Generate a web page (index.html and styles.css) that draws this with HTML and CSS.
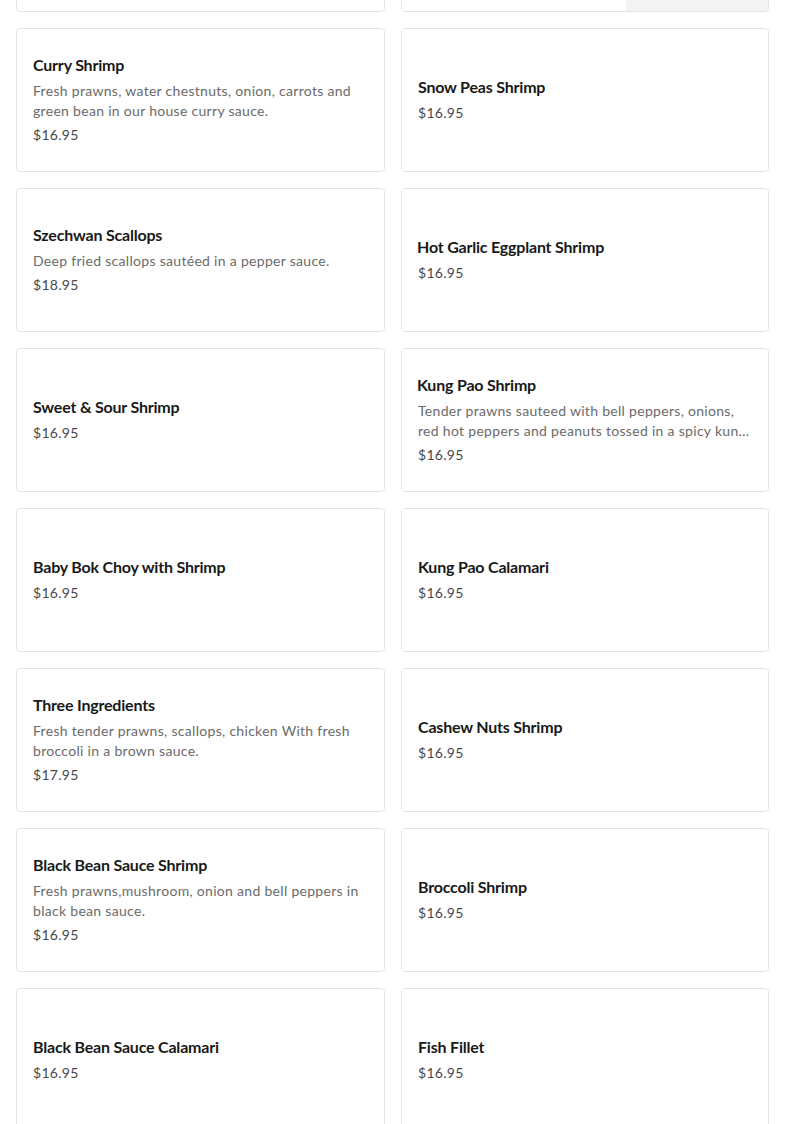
FILE: index.html
```html
<!DOCTYPE html>
<html>
<head>
<meta charset="utf-8">
<link rel="stylesheet" href="styles.css">
</head>
<body>
<div class="menu">
  <div class="card"></div>
  <div class="card"><div class="info"></div><div class="thumb"></div></div>

  <div class="card"><div class="info"><div class="name">Curry Shrimp</div><div class="desc">Fresh prawns, water chestnuts, onion, carrots and green bean in our house curry sauce.</div><div class="price">$16.95</div></div></div>
  <div class="card"><div class="info"><div class="name">Snow Peas Shrimp</div><div class="price">$16.95</div></div></div>

  <div class="card"><div class="info"><div class="name">Szechwan Scallops</div><div class="desc">Deep fried scallops sautéed in a pepper sauce.</div><div class="price">$18.95</div></div></div>
  <div class="card"><div class="info"><div class="name tight">Hot Garlic Eggplant Shrimp</div><div class="price">$16.95</div></div></div>

  <div class="card"><div class="info"><div class="name">Sweet &amp; Sour Shrimp</div><div class="price">$16.95</div></div></div>
  <div class="card"><div class="info"><div class="name tight">Kung Pao Shrimp</div><div class="desc">Tender prawns sauteed with bell peppers, onions, red hot peppers and peanuts tossed in a spicy kung pao sauce.</div><div class="price">$16.95</div></div></div>

  <div class="card"><div class="info"><div class="name">Baby Bok Choy with Shrimp</div><div class="price">$16.95</div></div></div>
  <div class="card"><div class="info"><div class="name">Kung Pao Calamari</div><div class="price">$16.95</div></div></div>

  <div class="card"><div class="info"><div class="name">Three Ingredients</div><div class="desc">Fresh tender prawns, scallops, chicken With fresh broccoli in a brown sauce.</div><div class="price">$17.95</div></div></div>
  <div class="card"><div class="info"><div class="name">Cashew Nuts Shrimp</div><div class="price">$16.95</div></div></div>

  <div class="card"><div class="info"><div class="name">Black Bean Sauce Shrimp</div><div class="desc">Fresh prawns,mushroom, onion and bell peppers in black bean sauce.</div><div class="price">$16.95</div></div></div>
  <div class="card"><div class="info"><div class="name">Broccoli Shrimp</div><div class="price">$16.95</div></div></div>

  <div class="card"><div class="info"><div class="name">Black Bean Sauce Calamari</div><div class="price">$16.95</div></div></div>
  <div class="card"><div class="info"><div class="name">Fish Fillet</div><div class="price">$16.95</div></div></div>
</div>
</body>
</html>
```

FILE: styles.css
```css
html, body {
  margin: 0;
  padding: 0;
  background: #ffffff;
}
body {
  font-family: "Lato", "Liberation Sans", sans-serif;
  color: #191919;
  overflow: hidden;
  height: 1124px;
}
.menu {
  display: grid;
  grid-template-columns: 369px 368px;
  column-gap: 16px;
  row-gap: 16px;
  padding: 0 16px;
  margin-top: -132px;
}
.card {
  box-sizing: border-box;
  height: 144px;
  border: 1px solid #e4e4e4;
  border-radius: 4px;
  display: flex;
  align-items: stretch;
  overflow: hidden;
  background: #fff;
}
.info {
  flex: 1;
  min-width: 0;
  padding: 0 16px 2px;
  display: flex;
  flex-direction: column;
  justify-content: center;
}
.name {
  font-size: 16px;
  line-height: 24px;
  font-weight: 700;
  letter-spacing: -0.2px;
  color: #191919;
}
.name.tight {
  margin-left: -1px;
}
.desc {
  margin-top: 4px;
  font-size: 14px;
  line-height: 20px;
  color: #6b6b6b;
  letter-spacing: 0.3px;
  display: -webkit-box;
  -webkit-line-clamp: 2;
  -webkit-box-orient: vertical;
  overflow: hidden;
}
.price {
  margin-top: 4px;
  font-size: 14px;
  line-height: 20px;
  color: #494949;
  letter-spacing: 0.3px;
}
.thumb {
  width: 142px;
  flex: none;
  background: #f4f4f4;
}
```
